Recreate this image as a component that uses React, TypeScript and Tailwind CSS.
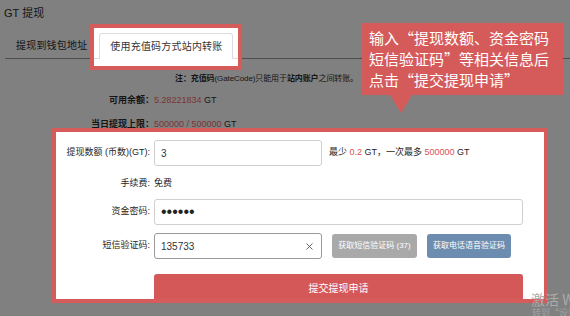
import React from 'react';
import { X } from 'lucide-react';

const font = "font-['Liberation_Sans','Noto_Sans_CJK_SC',sans-serif]";

export default function App() {
  return (
    <div lang="zh-CN" className={`relative h-[316px] w-[570px] overflow-hidden bg-[#808080] text-[#151515] ${font}`}>
      <div className="h-[24px] pl-[4px] pt-[6px] text-[11px] leading-[14px]">GT 提现</div>

      {/* tabs */}
      <div className="ml-[5px] flex h-[35px] border-b border-[#4d4d4d]">
        <span className="pl-[11px] pt-[15px] text-[10px] leading-[14px] tracking-[0.2px]">提现到钱包地址</span>
        <div className="relative z-10 ml-[3px] h-[46px] w-[152px] shrink-0 border-4 border-[#d65b5b] bg-white pt-[5px]">
          <div className="flex h-[26px] items-end">
            <div className="h-full w-[5px] border-b border-[#dcdcdc]" />
            <div className="flex h-[26px] w-[134px] items-center justify-center rounded-t-[3px] border border-b-0 border-[#dcdcdc] text-[10px] tracking-[0.2px] text-[#333]">
              使用充值码方式站内转账
            </div>
            <div className="h-full flex-1 border-b border-[#dcdcdc]" />
          </div>
        </div>
      </div>

      {/* notes */}
      <div className="mt-[14px] whitespace-nowrap pl-[175px] text-[8px] leading-[12px] tracking-[-0.1px]">
        <b>注：充值码</b>(GateCode)只能用于<b>站内账户</b>之间转账。
      </div>
      <div className="mt-[9px] flex text-[9px] leading-[12px]">
        <span className="w-[154px] text-right font-bold">可用余额：</span>
        <span><span className="text-[#7b3434]">5.28221834</span> GT</span>
      </div>
      <div className="mt-[12px] flex text-[9px] leading-[12px]">
        <span className="w-[154px] text-right font-bold">当日提现上限：</span>
        <span><span className="text-[#7b3434]">500000 / 500000</span> GT</span>
      </div>

      {/* form */}
      <div className="relative z-10 ml-[52px] mt-[-2px] h-[175px] w-[496px] overflow-hidden border-4 border-[#d65b5b] bg-white pt-[8px] text-[9px] text-[#262626]">
        <div className="flex h-[26px] items-center">
          <span className="w-[94px] text-right">提现数额 (币数)(GT):</span>
          <div className="ml-[4px] flex h-[26px] w-[168px] items-center rounded-[3px] border border-[#cfcfcf] pl-[6px] text-[10px] text-[#333]">3</div>
          <span className="ml-[7px]">
            最少 <span className="text-[#d9534f]">0.2</span> GT，一次最多 <span className="text-[#d9534f]">500000</span> GT
          </span>
        </div>
        <div className="mt-[8px] flex h-[20px] items-center">
          <span className="w-[94px] text-right">手续费:</span>
          <span className="ml-[4px]">免费</span>
        </div>
        <div className="mt-[5px] flex h-[26px] items-center">
          <span className="w-[94px] text-right">资金密码:</span>
          <div className="ml-[4px] flex h-[26px] w-[369px] items-center rounded-[3px] border border-[#cfcfcf] pl-[6px] text-[16px] leading-none text-[#222]">••••••</div>
        </div>
        <div className="mt-[8px] flex h-[26px] items-center">
          <span className="w-[94px] text-right">短信验证码:</span>
          <div className="relative ml-[4px] flex h-[26px] w-[168px] items-center rounded-[3px] border border-[#9a9a9a] pl-[6px] text-[10px] text-[#333]">
            135733
            <X className="absolute right-[6px] top-[7px] text-[#333]" size={11} strokeWidth={1.6} />
          </div>
          <div className="ml-[10px] flex h-[24px] w-[85px] items-center justify-center rounded-[3px] bg-[#a9a9a9] text-[8px] text-white">获取短信验证码 (37)</div>
          <div className="ml-[10px] flex h-[24px] w-[84px] items-center justify-center rounded-[3px] bg-[#6c8db0] text-[8px] text-white">获取电话语音验证码</div>
        </div>
        <div className="mt-[15px] flex">
          <div className="w-[98px]" />
          <div className="flex h-[28px] w-[369px] items-center justify-center rounded-t-[3px] bg-[#d45858] text-[10px] text-white">提交提现申请</div>
        </div>
      </div>

      {/* callout */}
      <div className="absolute left-[362px] top-[23px] z-20 h-[72px] w-[201px] bg-[#d55b5b] pl-[7px] pt-[4px] font-['Noto_Sans_CJK_SC',sans-serif] text-[15px] leading-[21px] text-white">
        <div>输入“提现数额、资金密码</div>
        <div>短信验证码”等相关信息后</div>
        <div>点击“提交提现申请”</div>
        <svg className="absolute left-[28px] top-[72px]" width="22" height="18" viewBox="0 0 22 18">
          <polygon points="0,0 22,0 11,18" fill="#d55b5b" />
        </svg>
      </div>

      {/* activation watermark */}
      <div className="absolute left-[531px] top-[291px] z-30 whitespace-nowrap font-['Noto_Sans_CJK_SC',sans-serif] text-[14px] leading-[16px] text-[#ababab]">激活 Windows</div>
      <div className="absolute left-[532px] top-[308px] z-30 whitespace-nowrap font-['Noto_Sans_CJK_SC',sans-serif] text-[9px] leading-[10px] text-[#a0a0a0]">转到“设置”以激活 Windows。</div>
    </div>
  );
}
